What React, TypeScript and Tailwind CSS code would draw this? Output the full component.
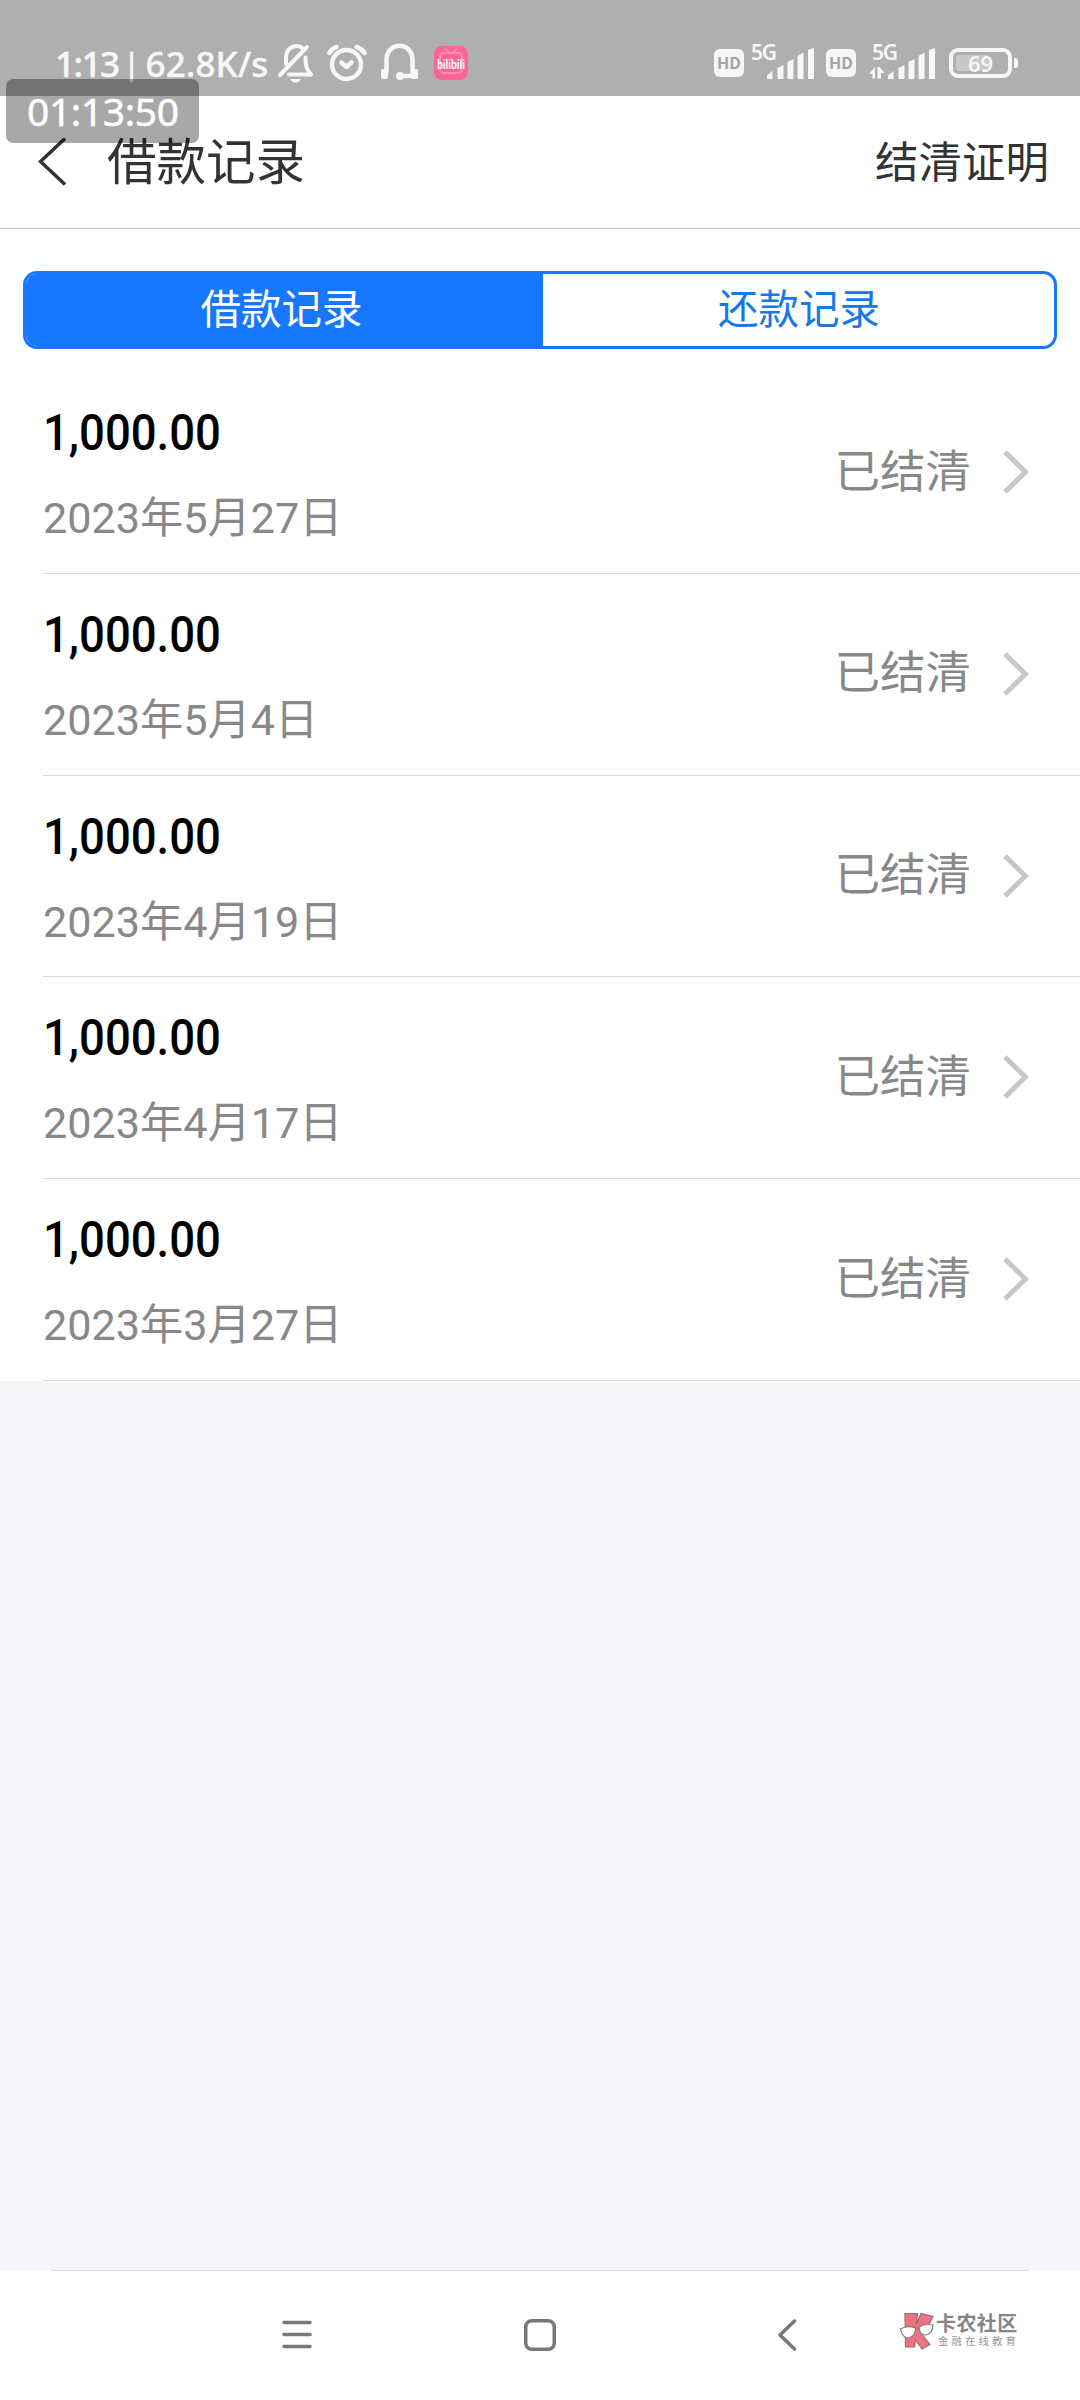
import React, { useState } from 'react';

interface LoanRecord {
  id: number;
  amount: string;
  date: string;
  status: string;
}

const records: LoanRecord[] = [
  { id: 1, amount: '1,000.00', date: '2023年5月27日', status: '已结清' },
  { id: 2, amount: '1,000.00', date: '2023年5月4日', status: '已结清' },
  { id: 3, amount: '1,000.00', date: '2023年4月19日', status: '已结清' },
  { id: 4, amount: '1,000.00', date: '2023年4月17日', status: '已结清' },
  { id: 5, amount: '1,000.00', date: '2023年3月27日', status: '已结清' },
];

const tabs = ['借款记录', '还款记录'];

function HdBadge() {
  return (
    <div className="w-[30px] h-7 mt-[49px] rounded-[6px] bg-[#f7f7f7] text-[#a5a5a5] text-[16px] leading-[29px] font-bold text-center font-['Noto_Sans',sans-serif]">HD</div>
  );
}

function Signal({ data }: { data?: boolean }) {
  return (
    <svg className="overflow-visible" width="66" height="96" viewBox="0 0 66 96" fill="#f7f7f7">
      <text x={data ? 3 : 0} y="59.500" fontSize="21" fontWeight="600" fontFamily="Noto Sans, sans-serif" textLength="26">5G</text>
      {data && <path d="M0 74l6-7v11.500H3.500V74zM8.500 67h2l5 6H12v5.500H8.500z" />}
      <path d="M18 75.500l5.500-4.500v8H18zM28.500 68l6-3v14h-6zM38.500 62l6-3v20h-6zM48.500 56l6-3.500V79h-6zM59 50l6-2v31h-6z" transform={data ? 'translate(1 0)' : 'translate(-2 0)'} />
    </svg>
  );
}

function StatusBar() {
  return (
    <div className="relative h-24 bg-[#afafaf] flex items-start">
      <div className="w-[278px] pl-[55px] pt-[38px] flex text-[35px] leading-[52px] text-[#f7f7f7] font-medium whitespace-nowrap font-['Noto_Sans',sans-serif] [-webkit-text-stroke:0.4px_#f7f7f7]">
        <span className="tracking-[-1.5px]">1:13</span>
        <span className="w-[27px] pr-px text-[31px] leading-[50px] flex justify-center">|</span>
        <span className="tracking-[0.1px]">62.8K/s</span>
      </div>
      {/* muted bell */}
      <svg width="36" height="96" viewBox="278 0 36 96" fill="none" stroke="#f7f7f7" strokeWidth="4" strokeLinecap="round" strokeLinejoin="round">
        <path d="M280 75l27-28M286 64V58c0-13 14-15 18-8M289 74.500h22c-4-5-5.500-7-5.500-17" />
        <path d="M290 79h11c-2 4.500-9 4.500-11 0z" fill="#f7f7f7" stroke="none" />
      </svg>
      <svg className="ml-[13px]" width="40" height="96" viewBox="327 0 40 96" fill="none" stroke="#f7f7f7" strokeWidth="4.500" strokeLinecap="round" strokeLinejoin="round">
        <circle cx="346.500" cy="64.500" r="14.500" />
        <path d="M341.500 62.500l5 4.500 5-4.500M329.500 53c1.500-3 4-5 7-6M356.500 47c3.500 1 6 3 8 6" />
      </svg>
      <svg className="ml-[13px]" width="39" height="96" viewBox="380 0 39 96" fill="none" stroke="#f7f7f7" strokeWidth="4.500" strokeLinecap="round">
        <path d="M386.500 72V60c0-19 26-19 26 0v12M400 76h14" />
        <rect x="381" y="69" width="7" height="10" rx="2" fill="#f7f7f7" stroke="none" />
        <rect x="411" y="69" width="7" height="10" rx="2" fill="#f7f7f7" stroke="none" />
        <circle cx="400" cy="76" r="4" fill="#f7f7f7" stroke="none" />
      </svg>
      <svg className="ml-[15px] overflow-visible" width="34" height="96" viewBox="434 0 34 96">
        <rect x="434" y="46" width="34" height="34" rx="8" fill="#fb6496" />
        <rect x="440" y="53" width="22" height="20" rx="4" fill="none" stroke="#ff8db3" strokeWidth="2" />
        <path d="M445 48l4 5M457 48l-4 5" stroke="#ff8db3" strokeWidth="2" />
        <text x="437" y="69" fontSize="13" fontWeight="600" fontFamily="Roboto, sans-serif" fill="#fff" textLength="28" lengthAdjust="spacingAndGlyphs">bilibili</text>
      </svg>
      <div className="ml-auto mr-[62px] flex items-start">
        <HdBadge />
        <div className="ml-[7px] w-[66px]"><Signal /></div>
        <div className="ml-[9px]"><HdBadge /></div>
        <div className="ml-[13px] w-[66px]"><Signal data /></div>
        <div className="ml-[14px] mt-12 w-[63px] h-[30px] rounded-[9px] border-4 border-[#f7f7f7] p-[3px]">
          <div className="w-[33px] h-4 rounded-[2px] bg-[#c8c8c8]">
            <div className="w-[49px] text-[22px] leading-4 font-semibold text-center text-[#f7f7f7] font-['Noto_Sans',sans-serif]">69</div>
          </div>
        </div>
        <div className="ml-0.5 mt-[58px] w-1 h-2.5 rounded-r-[3px] bg-[#f7f7f7]"></div>
      </div>
      {/* floating clock */}
      <div className="absolute z-10 left-1.5 top-[79px] w-[193px] h-16 pl-[21px] rounded-[7px] bg-black/34 text-white text-[39px] leading-[64px] tracking-[-0.4px] whitespace-nowrap font-['Noto_Sans',sans-serif] [-webkit-text-stroke:0.5px_#fff]">01:13:50</div>
    </div>
  );
}

function Watermark() {
  return (
    <div className="flex items-start">
      <svg width="36" height="38" viewBox="0 0 36 38" stroke="#8a7476" strokeWidth="1.200">
        <path d="M6 1.500h12.500l-1 10.500L22 1.500l12 3-5.500 11L22 21l9 11.500-8 4.500-6.500-9-1 7H6.500z" fill="#f07282" />
        <path d="M1.500 17c4-2.500 10-3 15-1 .5 5-2.500 9.500-7 10-4.500 0-7-4-8-9zM20 15c4-2.500 9-3 14-2 0 5-3 9.500-7 10-4 0-7-3-7-8zM16.500 17l3.500-1" fill="#fff" />
      </svg>
      <div className="ml-px text-[#858585]">
        <div className="text-[20px] leading-[24px] font-bold tracking-[0.4px]">卡农社区</div>
        <div className="ml-[2px] text-[10.500px] leading-[11px] tracking-[3px] text-[#999] whitespace-nowrap">金融在线教育</div>
      </div>
    </div>
  );
}

export default function App() {
  const [activeTab, setActiveTab] = useState(0);

  return (
    <div className="w-[1080px] h-[2400px] overflow-hidden flex flex-col bg-[#f5f5fa] font-['Roboto','Noto_Sans_CJK_SC',sans-serif]">
      <StatusBar />

      <header className="h-[133px] shrink-0 bg-white border-b border-[#c3c3c3] flex items-center justify-between pl-[38px] pr-[31px] text-[#333]">
        <div className="flex items-center">
          <svg width="28" height="48" viewBox="0 0 28 48" fill="none" stroke="currentColor" strokeWidth="3.500">
            <path d="M27 .5L2.500 23.500L27 46.500" />
          </svg>
          <h1 className="ml-[41px] pt-0.5 text-[49.500px] leading-[64px]">借款记录</h1>
        </div>
        <button className="pt-[4px] text-[43.500px] leading-[60px]">结清证明</button>
      </header>

      <main className="bg-white pt-[42px]">
        <div className="mx-[23px] h-[78px] grid grid-cols-[517px_1fr] rounded-[14px] border-[3px] border-[#1778ff] overflow-hidden">
          {tabs.map((tab, idx) => (
            <button
              key={tab}
              onClick={() => setActiveTab(idx)}
              className={`text-[40.500px] leading-[70px] ${idx === 0 ? 'pr-1.5' : 'pl-px'} ${activeTab === idx ? 'bg-[#1778ff] text-white' : 'text-[#1778e8]'}`}
            >
              {tab}
            </button>
          ))}
        </div>

        <div className="mt-[23px]">
          {records.map(record => (
            <div key={record.id} className="ml-[43px] h-[201.800px] border-b border-[#dcdcdc] flex justify-between">
              <div className="pt-[31px]">
                <div className="text-[50px] leading-[60px] font-medium text-black origin-left scale-x-[0.91]">{record.amount}</div>
                <div className="mt-[30px] text-[43.200px] leading-[52px] text-[#888]">{record.date}</div>
              </div>
              <div className="h-[200px] flex items-center mr-[51px]">
                <span className="pt-px text-[45.500px] leading-[60px] text-[#888]">{record.status}</span>
                <svg className="ml-[32px]" width="26" height="44" viewBox="0 0 26 44" fill="none" stroke="#c7c7c7" strokeWidth="5">
                  <path d="M2 2L22.500 22L2 42" />
                </svg>
              </div>
            </div>
          ))}
        </div>
      </main>

      <footer className="mt-auto h-[130px] shrink-0 bg-white flex items-start">
        <div className="w-[978px] h-[130px] ml-[51px] border-t border-[#e0e0e4] flex items-start">
          <svg className="ml-[231px] mt-[47px]" width="30" height="34" viewBox="0 0 30 34" stroke="#787878" strokeWidth="3.500" strokeLinecap="round">
            <path d="M2 4.500H28M2 16.500H28M2 28.500H28" />
          </svg>
          <svg className="ml-[212px] mt-12" width="32" height="32" viewBox="0 0 32 32" fill="none" stroke="#787878" strokeWidth="3.500">
            <rect x="1.750" y="1.750" width="28.500" height="28.500" rx="6" />
          </svg>
          <svg className="ml-[222px] mt-12" width="19" height="32" viewBox="0 0 19 32" fill="none" stroke="#787878" strokeWidth="3.500" strokeLinecap="round" strokeLinejoin="round">
            <path d="M16.500 2L2 16L16.500 30" />
          </svg>
          <div className="ml-[102px] mt-[41px]"><Watermark /></div>
        </div>
      </footer>
    </div>
  );
}
